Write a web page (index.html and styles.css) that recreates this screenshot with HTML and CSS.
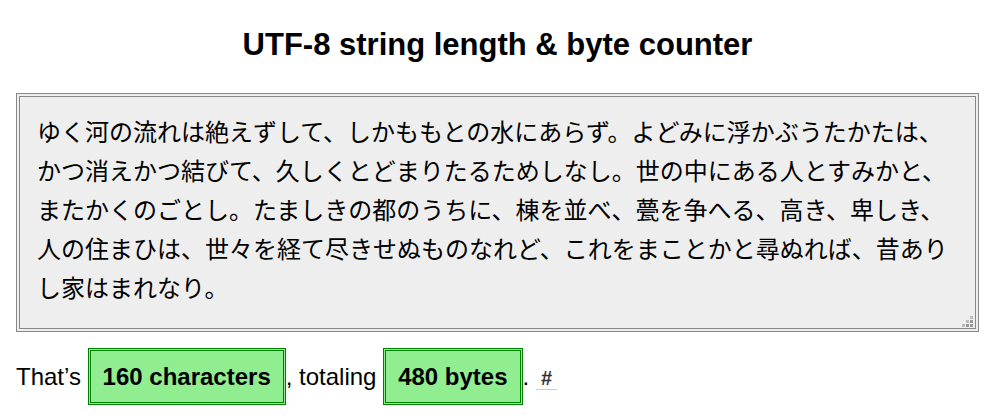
FILE: index.html
```html
<!DOCTYPE html>
<html lang="en">

<head>
    <meta charset="UTF-8">
    <title>UTF-8 string length &amp; byte counter</title>
    <link rel="stylesheet" href="styles.css">
</head>

<body>
    <h1 class="title">UTF-8 string length &amp; byte counter</h1>
    <div class="field">
        <textarea class="input" spellcheck="false">ゆく河の流れは絶えずして、しかももとの水にあらず。よどみに浮かぶうたかたは、かつ消えかつ結びて、久しくとどまりたるためしなし。世の中にある人とすみかと、またかくのごとし。たましきの都のうちに、棟を並べ、甍を争へる、高き、卑しき、人の住まひは、世々を経て尽きせぬものなれど、これをまことかと尋ぬれば、昔ありし家はまれなり。</textarea>
        <svg class="grip" width="12" height="12" viewBox="0 0 12 12">
            <rect x="9" y="1" width="3" height="3" fill="#bbb"/>
            <rect x="5" y="5" width="3" height="3" fill="#bbb"/>
            <rect x="9" y="5" width="3" height="3" fill="#999"/>
            <rect x="1" y="9" width="3" height="3" fill="#bbb"/>
            <rect x="5" y="9" width="3" height="3" fill="#999"/>
            <rect x="9" y="9" width="3" height="3" fill="#999"/>
        </svg>
    </div>
    <p class="result">
        That’s <strong class="count">160 characters</strong>, totaling <strong class="count">480 bytes</strong>. <a class="permalink" href="#">#</a>
    </p>
</body>

</html>
```

FILE: styles.css
```css
* {
    margin: 0;
    padding: 0;
}

html,
body {
    min-height: 420px;
}

body {
    box-sizing: border-box;
    padding: 1px 16px 30px;
    font-family: "Liberation Sans", Arial, sans-serif;
    color: #000;
    background: #fff;
}

.title {
    margin: 26px 0 30px;
    font-size: 31px;
    line-height: 36px;
    text-align: center;
}

.field {
    position: relative;
}

.input {
    display: block;
    width: 100%;
    height: 239px;
    box-sizing: border-box;
    padding: 14px 17px 18px;
    border: 4px double #888;
    background: #eee;
    font-family: "Noto Sans CJK JP", "Noto Sans", sans-serif;
    font-size: 24px;
    line-height: 39px;
    color: #000;
    outline: none;
    overflow: hidden;
    resize: none;
}

.grip {
    position: absolute;
    right: 6px;
    bottom: 5px;
}

.result {
    margin-top: 28px;
    font-size: 24px;
    line-height: 33px;
}

.count {
    padding: 12px 12px;
    border: 3px double green;
    background: lightgreen;
}

.permalink {
    padding: 0 5px;
    color: #333;
    font-size: 20px;
    font-weight: bold;
    text-decoration: none;
    border-bottom: 1px solid #ccc;
}
```
